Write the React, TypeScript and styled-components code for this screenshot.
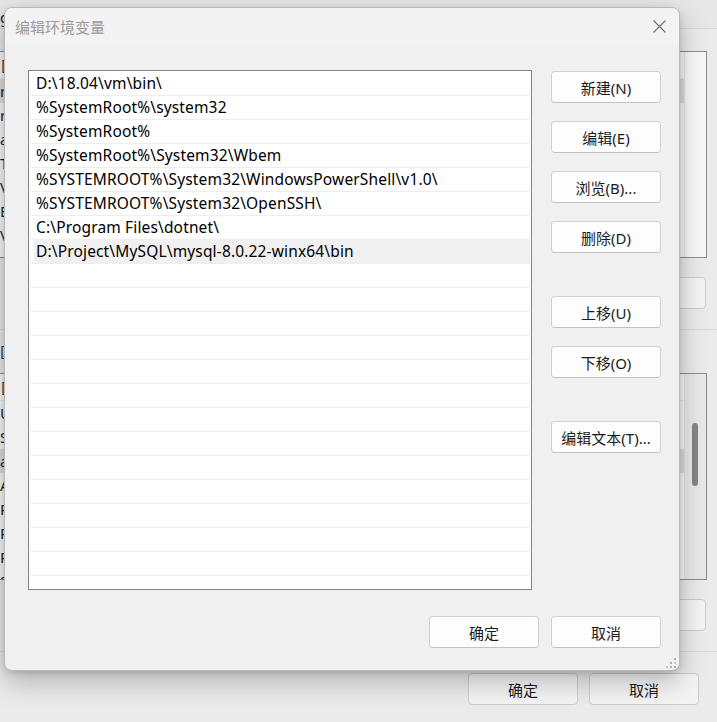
import React from 'react';
import styled, { createGlobalStyle } from 'styled-components';

const Global = createGlobalStyle`
  html, body { margin: 0; padding: 0; }
  body {
    width: 717px;
    height: 722px;
    overflow: hidden;
    background: #ebebeb;
    font-family: "Noto Sans", "Noto Sans CJK SC", sans-serif;
  }
  * { box-sizing: border-box; }
`;

const Screen = styled.div`
  position: relative;
  width: 717px;
  height: 722px;
  overflow: hidden;
  background: #ebebeb;
`;

/* ---------- parent window (behind the dialog) ---------- */

const ParentWindow = styled.div`
  display: flex;
  flex-direction: column;
  height: 100%;
  color: #1f1f1f;
  font-size: 15px;
`;

const ParentTop = styled.div`
  height: 29px;
  border-bottom: 1px solid #d9d9d9;
  background: #e7e7e7;
  display: flex;
  align-items: center;
  padding-top: 6px;
  white-space: nowrap;
`;

const ParentSection = styled.section`
  display: flex;
  flex-direction: column;
  padding: 22px 10px 20px 0;
  border-bottom: 1px solid #dadada;
`;

const ParentSectionTall = styled(ParentSection)`
  padding: 0 10px 20px 0;
`;

const ParentLabel = styled.div`
  height: 43px;
  display: flex;
  align-items: center;
  white-space: nowrap;
`;

const ParentList = styled.div`
  height: 207px;
  margin-left: -2px;
  border: 1px solid #8d8d8d;
  background: #f9f9f9;
  display: grid;
  grid-template-columns: 1fr 21px;
  overflow: hidden;
`;

const ParentColumn = styled.div`
  display: flex;
  flex-direction: column;
  border-right: 1px solid #e2e2e2;
`;

const ParentHeader = styled.div`
  height: 27px;
  display: flex;
  align-items: center;
  padding-left: 2px;
  white-space: nowrap;
  border-bottom: 1px solid #ececec;
`;

const ParentRow = styled.div<{ $selected?: boolean }>`
  height: 24px;
  line-height: 24px;
  padding-left: 1px;
  white-space: nowrap;
  background: ${(p) => (p.$selected ? '#dedede' : 'transparent')};
`;

const ScrollTrack = styled.div<{ $thumb?: boolean }>`
  position: relative;
  background: ${(p) => (p.$thumb ? '#e9e9e9' : 'transparent')};
`;

const ScrollThumb = styled.div`
  position: absolute;
  left: 7px;
  top: 49px;
  width: 6px;
  height: 63px;
  border-radius: 3px;
  background: #858585;
`;

const ParentButtons = styled.div`
  display: flex;
  justify-content: flex-end;
  gap: 11px;
  margin-top: 19px;
  padding-right: 1px;
`;

const ParentButton = styled.div`
  width: 110px;
  height: 32px;
  border: 1px solid #cdcdcd;
  border-radius: 4px;
  background: #f4f4f4;
  display: flex;
  align-items: center;
  justify-content: center;
  font-size: 15px;
  color: #1b1b1b;
`;

const ParentFooter = styled.div`
  display: flex;
  justify-content: flex-end;
  gap: 11px;
  padding: 21px 18px 0 0;
`;

/* ---------- dialog ---------- */

const Dialog = styled.div`
  position: absolute;
  left: 4px;
  top: 7px;
  width: 676px;
  height: 664px;
  border: 1px solid #b9b9b9;
  border-radius: 8px;
  overflow: hidden;
  background: #f0f0f0;
  box-shadow: 0 10px 28px rgba(0, 0, 0, 0.26), 0 2px 6px rgba(0, 0, 0, 0.12);
  display: flex;
  flex-direction: column;
`;

const TitleBar = styled.div`
  height: 36px;
  flex: none;
  display: flex;
  align-items: center;
  justify-content: space-between;
  background: #f3f3f3;
  padding-left: 10px;
`;

const Title = styled.div`
  font-size: 15px;
  color: #9b9b9b;
  padding-top: 1px;
  font-family: "Noto Sans CJK SC", sans-serif;
`;

const CloseButton = styled.div`
  width: 40px;
  height: 36px;
  display: flex;
  align-items: center;
  justify-content: center;
`;

const Body = styled.div`
  flex: 1;
  display: flex;
  flex-direction: column;
  padding: 26px 18px 0 23px;
  position: relative;
`;

const MainRow = styled.div`
  display: flex;
  gap: 19px;
`;

const PathList = styled.div`
  width: 504px;
  height: 520px;
  border: 1px solid #858585;
  background: #ffffff;
  padding-top: 1px;
  overflow: hidden;
`;

const PathRow = styled.div<{ $selected?: boolean }>`
  height: 24px;
  margin: 0 1px;
  padding-left: 6px;
  border-bottom: 1px solid #eeeeee;
  font-size: 15.5px;
  letter-spacing: 0.15px;
  line-height: 23px;
  color: #000;
  white-space: nowrap;
  background: ${(p) =>
    p.$selected ? 'linear-gradient(to right, #ffffff 4px, #f0f0f0 4px)' : 'transparent'};
`;

const ButtonColumn = styled.div`
  width: 110px;
  display: flex;
  flex-direction: column;
  padding-top: 1px;
`;

const ButtonGroup = styled.div`
  display: flex;
  flex-direction: column;
  gap: 18px;
  margin-bottom: 43px;
`;

const Button = styled.button`
  width: 110px;
  height: 32px;
  padding: 0;
  border: 1px solid #d0d0d0;
  border-bottom-color: #c2c2c2;
  border-radius: 4px;
  background: #fdfdfd;
  color: #1b1b1b;
  font-family: "Noto Sans", "Noto Sans CJK SC", sans-serif;
  font-size: 15px;
  display: flex;
  align-items: center;
  justify-content: center;
`;

const Footer = styled.div`
  display: flex;
  justify-content: flex-end;
  gap: 12px;
  margin-top: 26px;
`;

const Grip = styled.svg`
  position: absolute;
  right: 2px;
  bottom: 1px;
`;

const paths = [
  'D:\\18.04\\vm\\bin\\',
  '%SystemRoot%\\system32',
  '%SystemRoot%',
  '%SystemRoot%\\System32\\Wbem',
  '%SYSTEMROOT%\\System32\\WindowsPowerShell\\v1.0\\',
  '%SYSTEMROOT%\\System32\\OpenSSH\\',
  'C:\\Program Files\\dotnet\\',
  'D:\\Project\\MySQL\\mysql-8.0.22-winx64\\bin',
];

const userVars = ['r', 'r', 'a', 'T', 'V', 'E', 'V'];
const sysVars = ['U', 'S', 'a', 'A', 'R', 'R', 'R', 'S'];

export default function App() {
  const rows = [...paths, ...Array.from({ length: 14 }, () => '')];
  return (
    <Screen>
      <Global />
      <ParentWindow>
        <ParentTop>g</ParentTop>
        <ParentSection>
          <ParentList>
            <ParentColumn>
              <ParentHeader>区</ParentHeader>
              {userVars.map((v, i) => (
                <ParentRow key={i} $selected={i === 0}>
                  {v}
                </ParentRow>
              ))}
            </ParentColumn>
            <ScrollTrack />
          </ParentList>
          <ParentButtons>
            <ParentButton>新建(N)...</ParentButton>
            <ParentButton>编辑(E)...</ParentButton>
            <ParentButton>删除(D)</ParentButton>
          </ParentButtons>
        </ParentSection>
        <ParentSectionTall>
          <ParentLabel>区</ParentLabel>
          <ParentList>
            <ParentColumn>
              <ParentHeader>区</ParentHeader>
              {sysVars.map((v, i) => (
                <ParentRow key={i} $selected={i === 2}>
                  {v}
                </ParentRow>
              ))}
            </ParentColumn>
            <ScrollTrack $thumb>
              <ScrollThumb />
            </ScrollTrack>
          </ParentList>
          <ParentButtons>
            <ParentButton>新建(W)...</ParentButton>
            <ParentButton>编辑(I)...</ParentButton>
            <ParentButton>删除(L)</ParentButton>
          </ParentButtons>
        </ParentSectionTall>
        <ParentFooter>
          <ParentButton>确定</ParentButton>
          <ParentButton>取消</ParentButton>
        </ParentFooter>
      </ParentWindow>

      <Dialog>
        <TitleBar>
          <Title>编辑环境变量</Title>
          <CloseButton>
            <svg width="13" height="13" viewBox="0 0 13 13">
              <path d="M0.5 0.5 L12.5 12.5 M12.5 0.5 L0.5 12.5" stroke="#6f6f6f" strokeWidth="1.1" fill="none" />
            </svg>
          </CloseButton>
        </TitleBar>
        <Body>
          <MainRow>
            <PathList>
              {rows.map((r, i) => (
                <PathRow key={i} $selected={i === 7}>
                  {r}
                </PathRow>
              ))}
            </PathList>
            <ButtonColumn>
              <ButtonGroup>
                <Button>新建(N)</Button>
                <Button>编辑(E)</Button>
                <Button>浏览(B)...</Button>
                <Button>删除(D)</Button>
              </ButtonGroup>
              <ButtonGroup>
                <Button>上移(U)</Button>
                <Button>下移(O)</Button>
              </ButtonGroup>
              <Button>编辑文本(T)...</Button>
            </ButtonColumn>
          </MainRow>
          <Footer>
            <Button>确定</Button>
            <Button>取消</Button>
          </Footer>
          <Grip width="12" height="12" viewBox="0 0 12 12">
            <rect x="9" y="1" width="2" height="2" fill="#b0b0b0" />
            <rect x="5" y="5" width="2" height="2" fill="#b0b0b0" />
            <rect x="9" y="5" width="2" height="2" fill="#c8c8c8" />
            <rect x="1" y="9" width="2" height="2" fill="#c8c8c8" />
            <rect x="5" y="9" width="2" height="2" fill="#b0b0b0" />
            <rect x="9" y="9" width="2" height="2" fill="#b0b0b0" />
          </Grip>
        </Body>
      </Dialog>
    </Screen>
  );
}
